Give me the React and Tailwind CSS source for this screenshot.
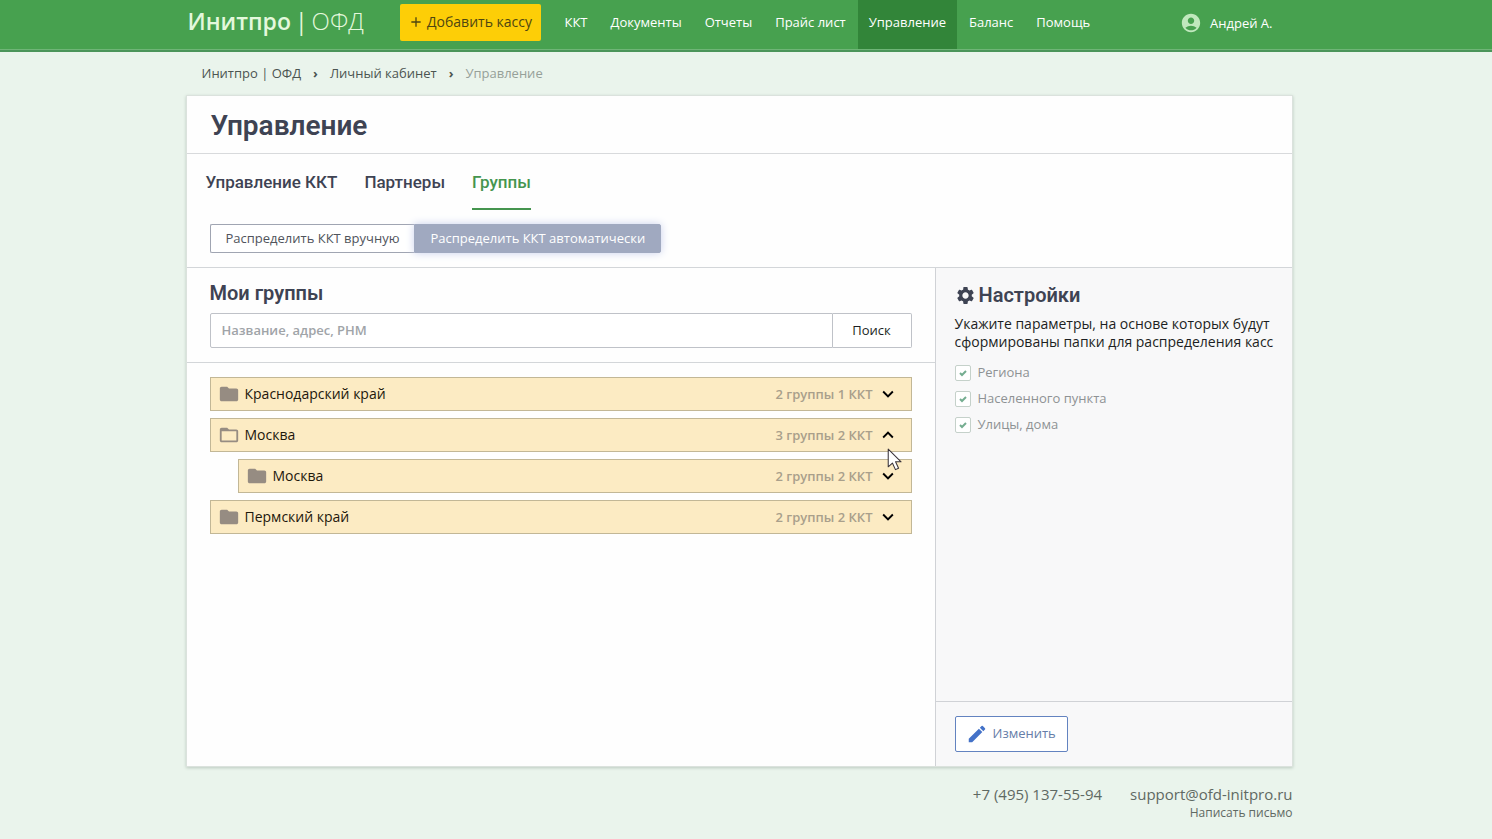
import React, { useState } from 'react';
import clsx from 'clsx';
import {
  MdAccountCircle,
  MdAdd,
  MdEdit,
  MdExpandLess,
  MdExpandMore,
  MdFolder,
  MdFolderOpen,
  MdSettings,
} from 'react-icons/md';

const NAV = ['ККТ', 'Документы', 'Отчеты', 'Прайс лист', 'Управление', 'Баланс', 'Помощь'];
const TABS = ['Управление ККТ', 'Партнеры', 'Группы'];
const OPTIONS = ['Региона', 'Населенного пункта', 'Улицы, дома'];

const GROUPS = [
  { id: 'krd', name: 'Краснодарский край', info: '2 группы 1 ККТ' },
  {
    id: 'msk',
    name: 'Москва',
    info: '3 группы 2 ККТ',
    children: [{ id: 'msk-city', name: 'Москва', info: '2 группы 2 ККТ' }],
  },
  { id: 'perm', name: 'Пермский край', info: '2 группы 2 ККТ' },
];

function Header() {
  return (
    <header className="border-b-2 border-[#4b955a] bg-[#47a14f] text-white">
      <div className="border-b border-[#6fb577] pr-[14px]">
        <div className="mx-auto flex h-[49px] max-w-[1107px] items-start">
          <a href="#" className="flex w-[214px] shrink-0 gap-1 pl-[2px] pt-1 text-[23px] leading-[34px] text-[#e3f8dc]">
            <span className="font-semibold">Инитпро</span>
            <span>|</span>
            <span className="text-2xl font-light leading-[34px]">ОФД</span>
          </a>
          <button
            type="button"
            className="mt-1 flex h-[37px] w-[141px] shrink-0 items-center justify-center gap-[3px] rounded-xs bg-[#fdce07] pb-[2px] text-sm text-[#4e4611]"
          >
            <MdAdd className="size-4" />
            Добавить кассу
          </button>
          <nav className="ml-[13px] flex gap-px text-[13px] font-medium">
            {NAV.map((item) => (
              <a
                key={item}
                href="#"
                className={clsx(
                  'h-[49px] whitespace-nowrap px-[11px] pt-3 leading-[21px]',
                  item === 'Управление' && 'bg-[#328539]'
                )}
              >
                {item}
              </a>
            ))}
          </nav>
          <a href="#" className="ml-auto mr-5 flex items-center gap-2 pt-3 text-[13px] font-medium leading-5">
            <MdAccountCircle className="size-[22px] text-[#c0e8bd]" />
            Андрей А.
          </a>
        </div>
      </div>
    </header>
  );
}

function Breadcrumbs() {
  return (
    <nav className="flex h-[43px] items-center gap-3 pl-4 text-[13px] text-[#4c5551]">
      <a href="#">Инитпро | ОФД</a>
      <span className="font-bold">›</span>
      <a href="#">Личный кабинет</a>
      <span className="font-bold">›</span>
      <span className="text-[#96a099]">Управление</span>
    </nav>
  );
}

function Cursor() {
  return (
    <svg viewBox="0 0 14 22" className="pointer-events-none absolute right-[10px] top-[30px] z-10 h-[23px] w-[15px]">
      <path
        d="M1 1v17l4-3.6 2.9 6.3 3-1.3L8 13.2h5.3L1 1z"
        fill="#fff"
        stroke="#39333a"
        strokeWidth="1"
        strokeLinejoin="round"
      />
    </svg>
  );
}

function GroupRow({ group, nested, open, onToggle, cursor }) {
  const Folder = open ? MdFolderOpen : MdFolder;
  const Arrow = open ? MdExpandLess : MdExpandMore;

  return (
    <li className={clsx('relative', nested && 'ml-7')}>
      <button
        type="button"
        aria-expanded={open}
        onClick={onToggle}
        className="flex h-[34px] w-full items-center border border-[#c2b796] bg-[#fcebc3] pl-[7px] pr-3 text-sm text-[#1d180c]"
      >
        <Folder className="mr-[5px] size-[22px] text-[#968c82]" />
        {group.name}
        <span className="ml-auto mr-1 text-[13px] font-semibold text-[#a99f8b]">{group.info}</span>
        <Arrow className="size-[22px] text-black" />
      </button>
      {cursor && <Cursor />}
    </li>
  );
}

function Groups() {
  const [opened, setOpened] = useState({ msk: true });
  const toggle = (id) => setOpened((prev) => ({ ...prev, [id]: !prev[id] }));

  return (
    <section className="min-w-0 flex-1">
      <div className="border-b border-[#d3d6d9] px-[23px] pb-[14px] pt-[11px]">
        <h2 className="mb-[6px] font-[Roboto] text-xl font-semibold leading-7 text-[#3e4353]">Мои группы</h2>
        <form className="flex h-[35px]" onSubmit={(e) => e.preventDefault()}>
          <input
            type="text"
            aria-label="Название, адрес, РНМ"
            placeholder="Название, адрес, РНМ"
            className="min-w-0 flex-1 rounded-l-xs border border-[#bfc2c8] bg-white px-[11px] text-[13px] font-semibold outline-none placeholder:text-[#a0a4a8]"
          />
          <button
            type="submit"
            className="w-[79px] rounded-r-xs border border-l-0 border-[#bfc2c8] bg-white text-[13px] font-medium text-[#1d1f24]"
          >
            Поиск
          </button>
        </form>
      </div>
      <ul className="flex flex-col gap-[7px] px-[23px] py-[14px]">
        {GROUPS.map((group) => (
          <React.Fragment key={group.id}>
            <GroupRow
              group={group}
              open={!!opened[group.id]}
              onToggle={() => toggle(group.id)}
              cursor={group.id === 'msk'}
            />
            {opened[group.id] &&
              group.children?.map((child) => (
                <GroupRow
                  key={child.id}
                  group={child}
                  nested
                  open={!!opened[child.id]}
                  onToggle={() => toggle(child.id)}
                />
              ))}
          </React.Fragment>
        ))}
      </ul>
    </section>
  );
}

function Settings() {
  return (
    <aside className="flex w-[357px] shrink-0 flex-col border-l border-[#d0d2d6] bg-[#f8f8f9]">
      <div className="flex-1 pl-[19px] pr-4 pt-[13px]">
        <h2 className="flex items-center gap-[3px] font-[Roboto] text-xl font-semibold leading-7 text-[#3e4353]">
          <MdSettings className="size-[21px]" />
          Настройки
        </h2>
        <p className="mt-[6px] text-sm leading-[18px] text-[#1c1f23]">
          Укажите параметры, на основе которых будут сформированы папки для распределения касс
        </p>
        <div className="mt-[14px] flex flex-col gap-[10px]">
          {OPTIONS.map((option) => (
            <label key={option} className="flex h-4 items-center gap-[7px] text-[13px] text-[#8e9294]">
              <span className="grid size-4 place-items-center">
                <input
                  type="checkbox"
                  defaultChecked
                  disabled
                  className="col-start-1 row-start-1 size-4 appearance-none rounded-xs border border-[#c5d1ca] bg-white"
                />
                <svg viewBox="0 0 8 8" className="pointer-events-none col-start-1 row-start-1 size-2">
                  <path d="M1 4l2 2 4-4" fill="none" stroke="#74ad90" strokeWidth="2" />
                </svg>
              </span>
              {option}
            </label>
          ))}
        </div>
      </div>
      <div className="border-t border-[#d0d2d6] pb-[14px] pl-[19px] pt-[14px]">
        <button
          type="button"
          className="flex h-9 items-center gap-[5px] rounded-xs border border-[#6383c0] bg-white pl-[10px] pr-[11px] text-[13px] text-[#657da8]"
        >
          <MdEdit className="size-[22px] text-[#4472c8]" />
          Изменить
        </button>
      </div>
    </aside>
  );
}

export default function App() {
  const [mode, setMode] = useState('auto');
  const modeClass = (value) =>
    mode === value
      ? 'border-[#a0a9c0] bg-[#a0a9c0] text-white font-medium shadow-[0_0_8px_#c9d0ed]'
      : 'border-[#a0a5b2] bg-white text-[#50545c]';

  return (
    <div className="flex min-h-screen flex-col bg-[#eaf4ec] font-['Open_Sans',sans-serif]">
      <Header />
      <div className="flex flex-1 flex-col pr-[14px]">
        <div className="mx-auto flex w-full max-w-[1107px] flex-1 flex-col">
          <Breadcrumbs />
          <main className="flex flex-1 flex-col border border-[#dbe2dd] bg-[#fefefe] shadow-[0_1px_3px_#bccbc0]">
            <h1 className="border-b border-[#d8dadc] px-6 pb-[9px] pt-3 font-[Roboto] text-[28px] font-semibold leading-9 text-[#3e4353]">
              Управление
            </h1>
            <div className="border-b border-[#d3d6d9] pb-[14px]">
              <div role="tablist" className="flex gap-[27px] px-[19px] pt-[14px] font-[Roboto] text-[17px] font-medium text-[#3e4353]">
                {TABS.map((tab) => (
                  <button
                    key={tab}
                    type="button"
                    role="tab"
                    aria-selected={tab === 'Группы'}
                    className={clsx(
                      'h-[42px] border-b-2 pb-3 leading-7',
                      tab === 'Группы' ? 'border-[#45954f] text-[#45954f]' : 'border-transparent'
                    )}
                  >
                    {tab}
                  </button>
                ))}
              </div>
              <div className="mt-[14px] flex px-[23px] text-[13px]">
                <button
                  type="button"
                  onClick={() => setMode('manual')}
                  className={clsx('h-[29px] rounded-l-xs border border-r-0 px-[15px]', modeClass('manual'))}
                >
                  Распределить ККТ вручную
                </button>
                <button
                  type="button"
                  onClick={() => setMode('auto')}
                  className={clsx('h-[29px] rounded-r-xs border px-[15px]', modeClass('auto'))}
                >
                  Распределить ККТ автоматически
                </button>
              </div>
            </div>
            <div className="flex flex-1">
              <Groups />
              <Settings />
            </div>
          </main>
          <footer className="flex h-[72px] justify-end gap-7 pt-[17px] text-[15px] leading-5 text-[#5f6963]">
            <a href="tel:+74951375594">+7 (495) 137-55-94</a>
            <div className="flex flex-col items-end">
              <a href="mailto:support@ofd-initpro.ru">support@ofd-initpro.ru</a>
              <a href="mailto:support@ofd-initpro.ru" className="text-xs leading-[18px]">
                Написать письмо
              </a>
            </div>
          </footer>
        </div>
      </div>
    </div>
  );
}
